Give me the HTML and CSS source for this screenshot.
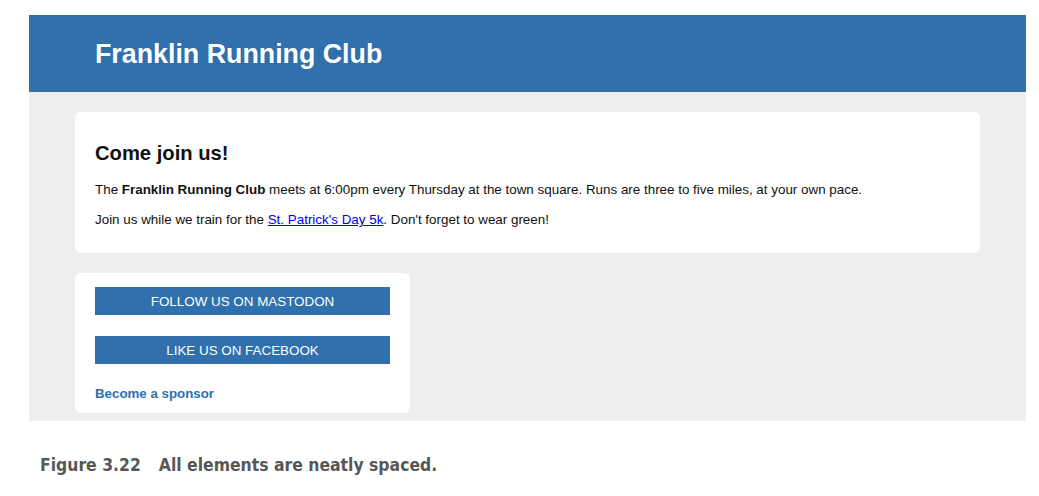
FILE: index.html
```html
<!DOCTYPE html>
<html>
<head>
<meta charset="utf-8">
<link rel="stylesheet" href="styles.css">
</head>
<body>
<div class="figure">
  <header class="site-header">
    <h1 class="site-title">Franklin Running Club</h1>
  </header>
  <main class="content">
    <section class="card intro">
      <h2 class="intro-title">Come join us!</h2>
      <p class="intro-text">The <strong>Franklin Running Club</strong> meets at 6:00pm every Thursday at the town square. Runs are three to five miles, at your own pace.</p>
      <p class="intro-text">Join us while we train for the <a class="inline-link" href="#">St. Patrick's Day 5k</a>. Don't forget to wear green!</p>
    </section>
    <section class="card social">
      <a class="button" href="#">FOLLOW US ON MASTODON</a>
      <a class="button" href="#">LIKE US ON FACEBOOK</a>
      <a class="sponsor" href="#">Become a sponsor</a>
    </section>
  </main>
</div>
<p class="caption"><span class="caption-num">Figure 3.22</span>All elements are neatly spaced.</p>
</body>
</html>
```

FILE: styles.css
```css
html, body {
  margin: 0;
  padding: 0;
  background: #ffffff;
}

body {
  font-family: "Liberation Sans", Arial, sans-serif;
  color: #111;
}

.figure {
  width: 997px;
  margin: 15px 0 0 29px;
}

.site-header {
  background: #2f70ad;
  height: 77px;
  display: flex;
  align-items: center;
  padding-left: 66px;
}

.site-title {
  margin: 0;
  color: #fff;
  font-size: 26.8px;
  font-weight: bold;
  line-height: 30px;
}

.content {
  background: #eeeeee;
  padding: 20px 46px 8px;
  display: flex;
  flex-direction: column;
  gap: 20px;
}

.card {
  background: #fff;
  border-radius: 6px;
  padding: 20px;
}

.intro {
  height: 141px;
  box-sizing: border-box;
  padding-top: 30px;
}

.intro-title {
  margin: 0 0 17px;
  font-size: 20.2px;
  line-height: 23px;
}

.intro-text {
  margin: 0 0 15px;
  font-size: 13.4px;
  line-height: 15px;
}

.inline-link {
  color: #0000ee;
}

.social {
  width: 335px;
  box-sizing: border-box;
  height: 140px;
  padding: 14px 20px;
  display: flex;
  flex-direction: column;
}

.button {
  flex-shrink: 0;
  display: flex;
  align-items: center;
  justify-content: center;
  height: 28px;
  background: #2f70ad;
  color: #fff;
  text-decoration: none;
  font-size: 13.4px;
  margin-bottom: 21px;
}

.sponsor {
  color: #2f70ad;
  font-weight: bold;
  font-size: 13.3px;
  text-decoration: none;
  line-height: 15px;
  margin-top: 1px;
}

.caption {
  margin: 34px 0 0 40px;
  font-family: "DejaVu Sans Condensed", "DejaVu Sans", sans-serif;
  font-stretch: condensed;
  font-weight: bold;
  font-size: 17.4px;
  color: #575757;
}

.caption-num {
  margin-right: 18px;
}
```
